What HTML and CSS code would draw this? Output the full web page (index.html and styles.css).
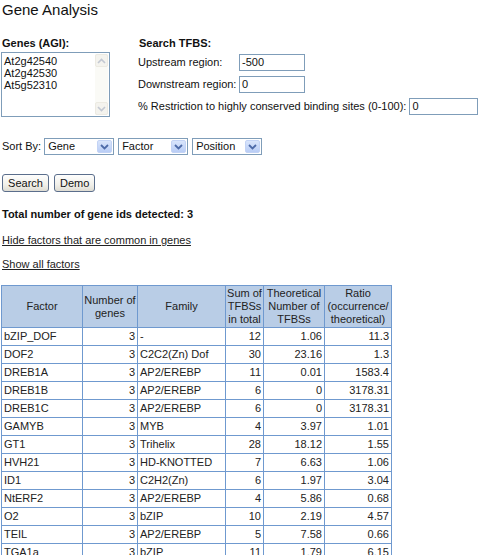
FILE: index.html
```html
<!DOCTYPE html>
<html>
<head>
<meta charset="utf-8">
<title>Gene Analysis</title>
<link rel="stylesheet" href="styles.css">
</head>
<body>
<h1 class="title">Gene Analysis</h1>
<form class="form">
  <div class="top">
    <div class="genes">
      <div class="label">Genes (AGI):</div>
      <div class="textarea">
        <div class="ta-text">At2g42540<br>At2g42530<br>At5g52310</div>
        <div class="scroll">
          <span class="sbtn"><svg width="9" height="6" viewBox="0 0 9 6"><path d="M1 5 L4.5 1.5 L8 5" fill="none" stroke="#c3c8d2" stroke-width="1.6"/></svg></span>
          <span class="sbtn"><svg width="9" height="6" viewBox="0 0 9 6"><path d="M1 1 L4.5 4.5 L8 1" fill="none" stroke="#c3c8d2" stroke-width="1.6"/></svg></span>
        </div>
      </div>
    </div>
    <div class="search">
      <div class="label">Search TFBS:</div>
      <div class="fields">
        <span class="flabel">Upstream region:</span><span class="input">-500</span>
        <span class="flabel">Downstream region:</span><span class="input">0</span>
        <div class="wide"><span class="flabel">% Restriction to highly conserved binding sites (0-100):</span><span class="input input-wide">0</span></div>
      </div>
    </div>
  </div>
  <div class="sort">
    <span class="sort-label">Sort By:</span>
    <span class="select"><span class="sval">Gene</span><span class="sarrow"><svg width="9" height="6" viewBox="0 0 9 6"><path d="M1 1 L4.5 4.5 L8 1" fill="none" stroke="#4d6aa8" stroke-width="1.8"/></svg></span></span>
    <span class="select"><span class="sval">Factor</span><span class="sarrow"><svg width="9" height="6" viewBox="0 0 9 6"><path d="M1 1 L4.5 4.5 L8 1" fill="none" stroke="#4d6aa8" stroke-width="1.8"/></svg></span></span>
    <span class="select"><span class="sval">Position</span><span class="sarrow"><svg width="9" height="6" viewBox="0 0 9 6"><path d="M1 1 L4.5 4.5 L8 1" fill="none" stroke="#4d6aa8" stroke-width="1.8"/></svg></span></span>
  </div>
  <div class="buttons">
    <button type="button" class="btn btn-search">Search</button>
    <button type="button" class="btn btn-demo">Demo</button>
  </div>
</form>
<p class="total">Total number of gene ids detected: 3</p>
<p class="link-row"><a href="#" class="link">Hide factors that are common in genes</a></p>
<p class="link-row link-row2"><a href="#" class="link">Show all factors</a></p>
<table class="results">
  <colgroup>
    <col class="c1"><col class="c2"><col class="c3"><col class="c4"><col class="c5"><col class="c6">
  </colgroup>
  <thead>
    <tr><th>Factor</th><th>Number of genes</th><th>Family</th><th>Sum of TFBSs in total</th><th>Theoretical Number of TFBSs</th><th>Ratio (occurrence/ theoretical)</th></tr>
  </thead>
  <tbody>
    <tr><td>bZIP_DOF</td><td class="num">3</td><td>-</td><td class="num">12</td><td class="num">1.06</td><td class="num">11.3</td></tr>
    <tr><td>DOF2</td><td class="num">3</td><td>C2C2(Zn) Dof</td><td class="num">30</td><td class="num">23.16</td><td class="num">1.3</td></tr>
    <tr><td>DREB1A</td><td class="num">3</td><td>AP2/EREBP</td><td class="num">11</td><td class="num">0.01</td><td class="num">1583.4</td></tr>
    <tr><td>DREB1B</td><td class="num">3</td><td>AP2/EREBP</td><td class="num">6</td><td class="num">0</td><td class="num">3178.31</td></tr>
    <tr><td>DREB1C</td><td class="num">3</td><td>AP2/EREBP</td><td class="num">6</td><td class="num">0</td><td class="num">3178.31</td></tr>
    <tr><td>GAMYB</td><td class="num">3</td><td>MYB</td><td class="num">4</td><td class="num">3.97</td><td class="num">1.01</td></tr>
    <tr><td>GT1</td><td class="num">3</td><td>Trihelix</td><td class="num">28</td><td class="num">18.12</td><td class="num">1.55</td></tr>
    <tr><td>HVH21</td><td class="num">3</td><td>HD-KNOTTED</td><td class="num">7</td><td class="num">6.63</td><td class="num">1.06</td></tr>
    <tr><td>ID1</td><td class="num">3</td><td>C2H2(Zn)</td><td class="num">6</td><td class="num">1.97</td><td class="num">3.04</td></tr>
    <tr><td>NtERF2</td><td class="num">3</td><td>AP2/EREBP</td><td class="num">4</td><td class="num">5.86</td><td class="num">0.68</td></tr>
    <tr><td>O2</td><td class="num">3</td><td>bZIP</td><td class="num">10</td><td class="num">2.19</td><td class="num">4.57</td></tr>
    <tr><td>TEIL</td><td class="num">3</td><td>AP2/EREBP</td><td class="num">5</td><td class="num">7.58</td><td class="num">0.66</td></tr>
    <tr><td>TGA1a</td><td class="num">3</td><td>bZIP</td><td class="num">11</td><td class="num">1.79</td><td class="num">6.15</td></tr>
  </tbody>
</table>
</body>
</html>
```
FILE: styles.css
```css
html, body {
  margin: 0;
  padding: 0;
  background: #fff;
}
body {
  font-family: "Liberation Sans", Arial, sans-serif;
  font-size: 11px;
  line-height: 13px;
  color: #111;
  padding: 1px 0 0 1px;
}
.title {
  margin: 0 0 0 1px;
  font-size: 15px;
  line-height: 18px;
  font-weight: normal;
}
.form {
  margin: 18px 0 0 0;
}
.top {
  display: flex;
}
.genes {
  width: 137px;
  flex: none;
}
.label {
  font-weight: bold;
  padding-left: 1px;
  height: 13px;
}
.textarea {
  margin-top: 2px;
  width: 107px;
  height: 63px;
  border: 1px solid #7f9db9;
  display: flex;
  background: #fff;
}
.ta-text {
  flex: 1;
  padding: 2px 0 0 2px;
  font-size: 11px;
  line-height: 12px;
}
.scroll {
  width: 13px;
  margin: 1px 1px 1px 0;
  background: #fafaf6;
  display: flex;
  flex-direction: column;
  justify-content: space-between;
}
.sbtn {
  height: 13px;
  background: #f4f3ee;
  border: 1px solid #eceae2;
  border-radius: 2px;
  box-sizing: border-box;
  display: flex;
  align-items: center;
  justify-content: center;
}
.search {
  flex: 1;
}
.fields {
  display: grid;
  grid-template-columns: 101px auto;
  row-gap: 5px;
  margin-top: 4px;
  align-items: center;
}
.flabel {
  white-space: nowrap;
}
.input {
  display: block;
  box-sizing: border-box;
  width: 66px;
  height: 17px;
  border: 1px solid #7f9db9;
  padding: 1px 0 0 2px;
  line-height: 13px;
  background: #fff;
}
.wide {
  grid-column: 1 / 3;
  display: flex;
  align-items: center;
  gap: 3px;
}
.input-wide {
  width: 69px;
}
.sort {
  display: flex;
  align-items: center;
  gap: 4px;
  margin-top: 21px;
  padding-left: 1px;
}
.sort-label {
  margin-right: -1px;
}
.select {
  display: flex;
  box-sizing: border-box;
  width: 70px;
  height: 17px;
  border: 1px solid #7f9db9;
  background: #fff;
  align-items: stretch;
}
.sval {
  flex: 1;
  padding: 1px 0 0 3px;
  line-height: 13px;
}
.sarrow {
  width: 15px;
  margin: 1px;
  box-sizing: border-box;
  background: linear-gradient(#d9e5fb, #b9cdf6);
  border: 1px solid #c3d3f5;
  border-radius: 2px;
  display: flex;
  align-items: center;
  justify-content: center;
}
.buttons {
  display: flex;
  gap: 5px;
  margin-top: 19px;
  padding-left: 1px;
}
.btn {
  font-family: "Liberation Sans", Arial, sans-serif;
  font-size: 11px;
  line-height: 13px;
  color: #111;
  height: 18px;
  padding: 0 5px;
  border: 1px solid #5b6e8c;
  border-radius: 3px;
  background: linear-gradient(#fefefd, #f1f0ea 60%, #dedcd3);
  margin: 0;
}
.btn-search {
  width: 47px;
}
.btn-demo {
  width: 41px;
}
.total {
  margin: 16px 0 0 1px;
  font-weight: bold;
}
.link-row {
  margin: 13px 0 0 1px;
}
.link-row2 {
  margin-top: 11px;
}
.link {
  color: #222;
  text-decoration: underline;
}
.results {
  margin-top: 14px;
  border-collapse: collapse;
  table-layout: fixed;
  width: 390px;
  border: 1px solid #6f99cf;
}
.c1 { width: 81px; }
.c2 { width: 55px; }
.c3 { width: 88px; }
.c4 { width: 38px; }
.c5 { width: 61px; }
.c6 { width: 67px; }
.results th,
.results td {
  border: 1px solid #6f99cf;
  padding: 0 2px;
  color: #222;
  overflow: hidden;
  white-space: nowrap;
}
.results th {
  background: #b9cde6;
  font-weight: normal;
  text-align: center;
  white-space: normal;
  height: 41px;
  line-height: 13px;
  padding: 0 1px;
}
.results td {
  height: 17px;
  line-height: 13px;
}
.results td.num {
  text-align: right;
}
```
